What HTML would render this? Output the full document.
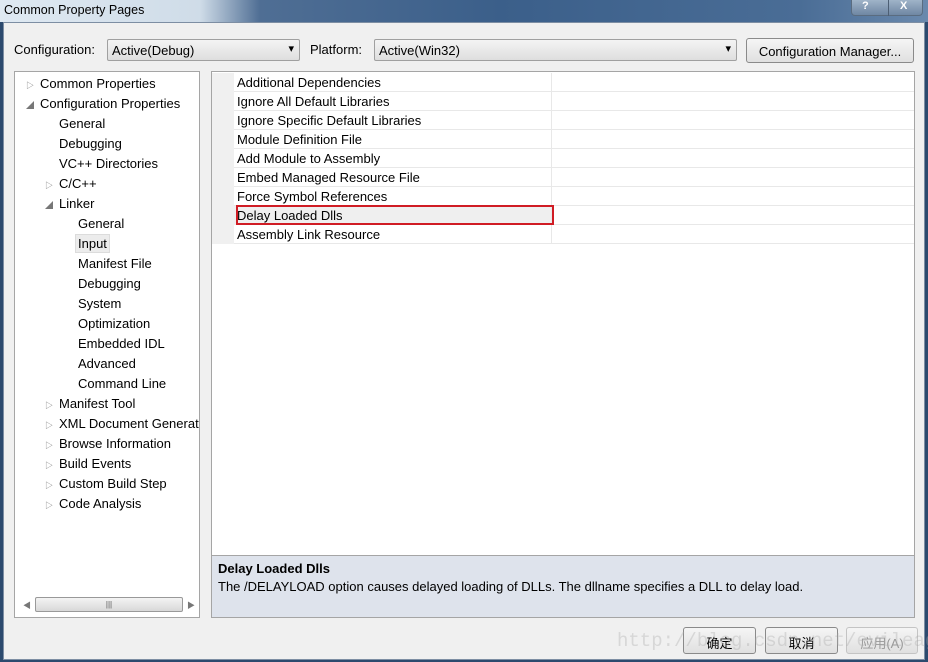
<!DOCTYPE html>
<html><head><meta charset="utf-8"><style>
*{margin:0;padding:0;box-sizing:border-box}
body{width:928px;height:662px;overflow:hidden;background:#2c4a6e;font-family:"Liberation Sans","Noto Sans CJK SC",sans-serif;font-size:13px;color:#000;position:relative}
.abs{position:absolute}
.title{left:0;top:0;width:928px;height:22px;background:linear-gradient(90deg,#dfe9f2 0,#cfdce8 200px,#4f6e94 260px,#3b5f8a 500px,#4a6d96 800px,#6a89ad 928px)}
.body{left:3px;top:22px;width:922px;height:638px;background:#f0f0f0;border:1px solid #7d8ea3}
.combo{height:22px;border:1px solid #a0a0a0;border-radius:2px;background:linear-gradient(#f4f4f4,#dedede);padding:3px 4px;font-size:13px}
.combo:after{content:"▾";position:absolute;right:5px;top:2px;font-size:11px}
.btn{border:1px solid #8a8a8a;border-radius:3px;background:linear-gradient(#f5f5f5,#e0e0e0);text-align:center}
.tree{left:14px;top:71px;width:186px;height:547px;background:#fff;border:1px solid #a5a5a5;overflow:hidden}
.ti{position:absolute;white-space:nowrap;font-size:13px;top:0}
.ar{position:absolute;font-size:8px;color:#777}
.grid{left:211px;top:71px;width:704px;height:484px;background:#fff;border:1px solid #a5a5a5;border-bottom:none}
.row{position:absolute;left:0;width:702px;height:19px;border-bottom:1px solid #e8e8e8}
.row .g{position:absolute;left:0;top:0;width:22px;height:19px;background:#f0f0f0}
.row .n{position:absolute;left:22px;top:0;width:318px;height:19px;border-right:1px solid #e8e8e8;padding:2px 3px}
.desc{left:211px;top:555px;width:704px;height:63px;background:#dee3ec;border:1px solid #a5a5a5;padding:5px 6px}
</style></head><body>
<div class="abs title"></div>
<div class="abs" style="left:4px;top:3px;font-size:12.5px">Common Property Pages</div>
<div class="abs" style="left:851px;top:0;width:72px;height:16px;border:1px solid #5a6c80;border-top:none;border-radius:0 0 4px 4px;background:linear-gradient(#9fb3c8,#6f87a3);color:#fff;font-size:11px;font-weight:bold"><span style="position:absolute;left:10px;top:0">?</span><span style="position:absolute;left:36px;top:0;width:1px;height:16px;background:#4d5f74"></span><span style="position:absolute;left:48px;top:0">X</span></div>
<div class="abs body"></div>
<div class="abs" style="left:14px;top:42px">Configuration:</div>
<div class="abs combo" style="left:107px;top:39px;width:193px">Active(Debug)</div>
<div class="abs" style="left:310px;top:42px">Platform:</div>
<div class="abs combo" style="left:374px;top:39px;width:363px">Active(Win32)</div>
<div class="abs btn" style="left:746px;top:38px;width:168px;height:25px;padding-top:5px">Configuration Manager...</div>

<div class="abs tree">
<span class="ar" style="left:11px;top:8px">▷</span><span class="ti" style="left:25px;top:4px">Common Properties</span>
<span class="ar" style="left:11px;top:28px">◢</span><span class="ti" style="left:25px;top:24px">Configuration Properties</span>
<span class="ti" style="left:44px;top:44px">General</span>
<span class="ti" style="left:44px;top:64px">Debugging</span>
<span class="ti" style="left:44px;top:84px">VC++ Directories</span>
<span class="ar" style="left:30px;top:108px">▷</span><span class="ti" style="left:44px;top:104px">C/C++</span>
<span class="ar" style="left:30px;top:128px">◢</span><span class="ti" style="left:44px;top:124px">Linker</span>
<span class="ti" style="left:63px;top:144px">General</span>
<span class="ti" style="left:60px;top:162px;background:#ececec;border:1px solid #dcdcdc;padding:1px 2px">Input</span>
<span class="ti" style="left:63px;top:184px">Manifest File</span>
<span class="ti" style="left:63px;top:204px">Debugging</span>
<span class="ti" style="left:63px;top:224px">System</span>
<span class="ti" style="left:63px;top:244px">Optimization</span>
<span class="ti" style="left:63px;top:264px">Embedded IDL</span>
<span class="ti" style="left:63px;top:284px">Advanced</span>
<span class="ti" style="left:63px;top:304px">Command Line</span>
<span class="ar" style="left:30px;top:328px">▷</span><span class="ti" style="left:44px;top:324px">Manifest Tool</span>
<span class="ar" style="left:30px;top:348px">▷</span><span class="ti" style="left:44px;top:344px">XML Document Generator</span>
<span class="ar" style="left:30px;top:368px">▷</span><span class="ti" style="left:44px;top:364px">Browse Information</span>
<span class="ar" style="left:30px;top:388px">▷</span><span class="ti" style="left:44px;top:384px">Build Events</span>
<span class="ar" style="left:30px;top:408px">▷</span><span class="ti" style="left:44px;top:404px">Custom Build Step</span>
<span class="ar" style="left:30px;top:428px">▷</span><span class="ti" style="left:44px;top:424px">Code Analysis</span>
<span class="ar" style="left:8px;top:528px;font-size:8px">◀</span>
<div class="abs" style="left:20px;top:525px;width:148px;height:15px;border:1px solid #999;border-radius:2px;background:linear-gradient(#f4f4f4,#d8d8d8);text-align:center;font-size:8px;color:#555;line-height:13px">|||</div>
<span class="ar" style="left:172px;top:528px;font-size:8px">▶</span>
</div>

<div class="abs grid">
<div class="row" style="top:1px"><div class="g"></div><div class="n">Additional Dependencies</div></div>
<div class="row" style="top:20px"><div class="g"></div><div class="n">Ignore All Default Libraries</div></div>
<div class="row" style="top:39px"><div class="g"></div><div class="n">Ignore Specific Default Libraries</div></div>
<div class="row" style="top:58px"><div class="g"></div><div class="n">Module Definition File</div></div>
<div class="row" style="top:77px"><div class="g"></div><div class="n">Add Module to Assembly</div></div>
<div class="row" style="top:96px"><div class="g"></div><div class="n">Embed Managed Resource File</div></div>
<div class="row" style="top:115px"><div class="g"></div><div class="n">Force Symbol References</div></div>
<div class="row" style="top:134px"><div class="g"></div><div class="n" style="background:#efefef">Delay Loaded Dlls</div></div>
<div class="row" style="top:153px"><div class="g"></div><div class="n">Assembly Link Resource</div></div>
<div class="abs" style="left:24px;top:133px;width:318px;height:20px;border:2px solid #d01c24"></div>
</div>
<div class="abs desc"><div style="font-weight:bold">Delay Loaded Dlls</div><div style="margin-top:3px">The /DELAYLOAD option causes delayed loading of DLLs. The dllname specifies a DLL to delay load.</div></div>

<div class="abs btn" style="left:683px;top:627px;width:73px;height:27px;padding-top:5px">确定</div>
<div class="abs btn" style="left:765px;top:627px;width:73px;height:27px;padding-top:5px">取消</div>
<div class="abs btn" style="left:846px;top:627px;width:72px;height:27px;padding-top:5px;color:#999;border-color:#c4c4c4">应用(A)</div>
<div class="abs" style="left:617px;top:630px;font-family:'Liberation Mono',monospace;font-size:19px;color:rgba(170,170,170,0.35);white-space:nowrap">http://blog.csdn.net/evileagle</div>
</body></html>
